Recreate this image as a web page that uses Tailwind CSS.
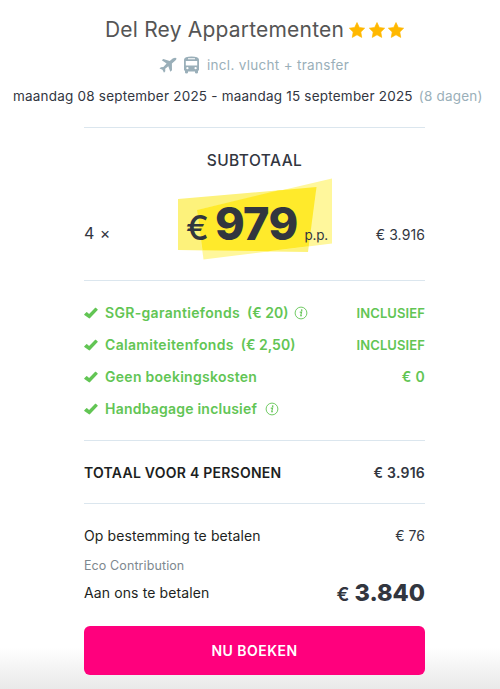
<!DOCTYPE html>
<html lang="nl">
<head>
<meta charset="utf-8">
<title>Del Rey Appartementen</title>
<script src="https://cdn.jsdelivr.net/npm/@tailwindcss/browser@4"></script>
</head>
<body class="bg-white">
<svg class="hidden">
  <symbol id="star" viewBox="0 0 24 24"><path stroke="currentColor" stroke-width="1" stroke-linejoin="round" d="M12 .8l3.500 7.400 8 1.100-5.800 5.700 1.400 8.100L12 19.200l-7.100 3.900 1.400-8.100L.5 9.300l8-1.100z"/></symbol>
  <symbol id="check" viewBox="0 0 14 12"><path d="M0.300 7.300L2.300 5.200Q2.700 4.900 3.100 5.200L5.100 7L11.200.800Q11.500.500 11.900.800L13.700 2.400Q14 2.700 13.700 3.100L6.100 11.100Q5.400 11.800 4.600 11.100L.300 7.900Q0 7.600.300 7.300z"/></symbol>
  <symbol id="info" viewBox="0 0 14 14"><circle cx="7" cy="7" r="5.900" fill="none" stroke="currentColor" stroke-width=".9"/><circle cx="7.700" cy="4.100" r=".85"/><path d="M5.700 6.300L7.600 6L6.700 9.700Q6.700 10.100 7.800 9.600" fill="none" stroke="currentColor" stroke-width="1.100"/></symbol>
</svg>
<main class="w-[500px] h-[689px] pl-[4px] flex flex-col overflow-hidden whitespace-nowrap bg-linear-to-b from-white from-94% to-[#e9e9e9] font-['Inter',sans-serif] text-[#32363f] text-[14px]">
  <header class="w-[496px] h-[127px] flex flex-col items-start pt-[15px]">
    <div class="h-[30px] flex items-center pl-[101px]">
      <h1 class="text-[21px] leading-[30px] tracking-[0.2px] text-[#555]">Del Rey Appartementen</h1>
      <div class="flex gap-[3.500px] ml-[5px] mb-[1px] text-[#ffb800]">
        <svg class="size-[16px] fill-current"><use href="#star"/></svg>
        <svg class="size-[16px] fill-current"><use href="#star"/></svg>
        <svg class="size-[16px] fill-current"><use href="#star"/></svg>
      </div>
    </div>
    <div class="h-[40px] flex items-center text-[#9aafb9] pl-[155px]">
      <svg class="w-[18px] h-[17px] fill-current" viewBox="0 0 18 17"><path d="M2.800 3.200L4.300 1.900L10.700 3.900L13.700 1.600Q16.300.3 17.500 1.300Q17.700 2.700 15.500 4.300L12.900 6.500L13 13.200L11.300 14.700L9.300 9.300L6.200 11.700L6.300 14.300L5 15.700L3.500 12.800L.5 11.400L1.900 10.200L4.400 10.100L7.600 6.400z"/></svg>
      <svg class="w-[15px] h-[18px] fill-current ml-[7px]" viewBox="0 0 15 18"><path fill-rule="evenodd" d="M0 3.800Q.3.500 7.500.500T15 3.800V14.500H14V16.500Q14 17.500 12.500 17.500T11 16.500V15.500H4V16.500Q4 17.500 2.500 17.500T1 16.500V14.500H0zM4 2.200V3.200H11V2.200zM1.800 5V9.500H13.200V5zM3.400 11A1.150 1.150 0 1 0 3.400 13.300A1.150 1.150 0 1 0 3.400 11M11.600 11A1.150 1.150 0 1 0 11.600 13.300A1.150 1.150 0 1 0 11.600 11"/></svg>
      <span class="ml-[8px] text-[13.5px] tracking-[0.3px]">incl. vlucht + transfer</span>
    </div>
    <div class="h-[22px] leading-[22px] flex pl-[9px] text-[13.5px]">
      <span class="tracking-[0.21px]">maandag 08 september 2025 - maandag 15 september 2025</span>
      <span class="ml-[6px] tracking-[0.2px] text-[#9aafb9]">(8 dagen)</span>
    </div>
  </header>

  <section class="ml-[80px] w-[341px] h-[153px] border-t border-[#dbe6ee] flex flex-col pt-[22px]">
    <h2 class="text-center text-[15.500px] leading-[21px] tracking-[0.45px] font-medium">SUBTOTAAL</h2>
    <div class="h-[82px] mt-[7px] flex items-end justify-between">
      <span class="text-[16px] leading-[20px] tracking-[0.5px] mb-[17px] w-[94px]">4 ×</span>
      <div class="grid w-[154px] h-[82px] shrink-0">
        <svg class="col-start-1 row-start-1 w-[154px] h-[82px]" viewBox="0 0 154 82"><path fill="#fdf27b" d="M0 21L138.500 9L130 74L0 72z"/><path fill="#fff79c" d="M19 32L154 0.500V65.500L25.500 81.500z"/><path fill="#ffea2b" d="M19 32L100 12.500L138.500 9L130.700 68.200L90 73.200L24.500 72.300z"/></svg>
        <div class="col-start-1 row-start-1 flex items-baseline pl-[8px] pt-[18px]">
          <span class="text-[34px] leading-[56px] font-medium">€</span>
          <span class="text-[45px] leading-[56px] tracking-[-0.7px] font-extrabold ml-[6px]">979</span>
          <span class="text-[13.500px] tracking-[-0.200px] ml-[7px]">p.p.</span>
        </div>
      </div>
      <span class="w-[93px] text-right leading-[20px] tracking-[0.1px] mb-[15px]">€ 3.916</span>
    </div>
  </section>

  <section class="ml-[80px] w-[341px] h-[160px] border-t border-[#dbe6ee] pt-[16px] text-[#62c554] font-semibold text-[14px] leading-[32px]">
    <div class="flex items-center h-[32px]"><svg class="w-[14px] h-[12px] fill-current mr-[7px]"><use href="#check"/></svg><span class="tracking-[0.32px]">SGR-garantiefonds</span><span class="ml-[7px]">(€ 20)</span><svg class="size-[14px] fill-current ml-[6px]"><use href="#info"/></svg><span class="ml-auto text-[13px] tracking-[0.1px]">INCLUSIEF</span></div>
    <div class="flex items-center h-[32px]"><svg class="w-[14px] h-[12px] fill-current mr-[7px]"><use href="#check"/></svg><span class="tracking-[0.32px]">Calamiteitenfonds</span><span class="ml-[7px]">(€ 2,50)</span><span class="ml-auto text-[13px] tracking-[0.1px]">INCLUSIEF</span></div>
    <div class="flex items-center h-[32px]"><svg class="w-[14px] h-[12px] fill-current mr-[7px]"><use href="#check"/></svg><span class="tracking-[0.28px]">Geen boekingskosten</span><span class="ml-auto tracking-[0.3px]">€ 0</span></div>
    <div class="flex items-center h-[31px]"><svg class="w-[14px] h-[12px] fill-current mr-[7px]"><use href="#check"/></svg><span class="tracking-[0.22px]">Handbagage inclusief</span><svg class="size-[14px] fill-current ml-[8px]"><use href="#info"/></svg></div>
  </section>

  <section class="ml-[80px] w-[341px] h-[63px] border-t border-[#dbe6ee] flex items-center justify-between font-semibold tracking-[0.24px]">
    <span class="text-[#1d1f22]">TOTAAL VOOR 4 PERSONEN</span><span>€ 3.916</span>
  </section>

  <section class="ml-[80px] w-[341px] border-t border-[#dbe6ee] pt-[22px]">
    <div class="flex justify-between leading-[20px]"><span class="text-[#1d1f22] tracking-[0.1px]">Op bestemming te betalen</span><span>€ 76</span></div>
    <div class="mt-[11px] text-[12.500px] leading-[18px] tracking-[0.1px] text-[#7e888f]">Eco Contribution</div>
    <div class="h-[36px] flex items-center justify-between"><span class="text-[#1d1f22] tracking-[0.12px] mb-[1px]">Aan ons te betalen</span><span class="flex items-baseline font-extrabold"><span class="text-[19px] font-semibold">€</span><span class="text-[23.500px] ml-[5px]">3.840</span></span></div>
    <button class="mt-[15px] w-full h-[49px] rounded-[6px] bg-[#ff007d] text-white font-semibold text-[14px] tracking-[0.45px]">NU BOEKEN</button>
  </section>
</main>
</body>
</html>
